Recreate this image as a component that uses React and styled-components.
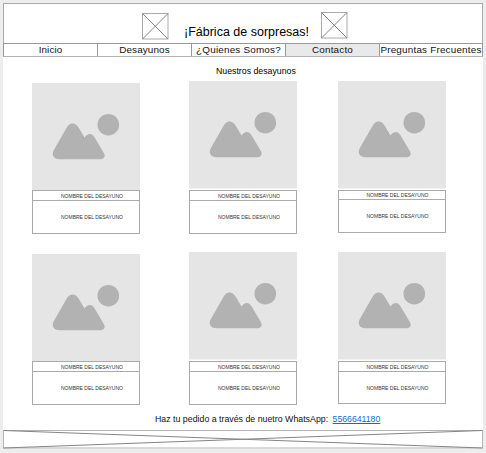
import React from "react";
import styled, { createGlobalStyle } from "styled-components";

const GlobalStyle = createGlobalStyle`
  *, *::before, *::after { box-sizing: border-box; }
  body {
    margin: 0;
    background: #ededed;
    color: #111;
    font-family: "Liberation Sans", Arial, sans-serif;
    overflow: hidden;
  }
`;

const Page = styled.div`
  width: 480px;
  height: 446px;
  margin: 3px 0 0 3px;
  background: #fff;
  display: flex;
  flex-direction: column;
`;

const Header = styled.header`
  height: 40px;
  flex: none;
  display: flex;
  align-items: flex-start;
  padding: 8px 0 0 138px;
  border: 1px solid #a9a9a9;
  border-bottom: 0;
`;

const Title = styled.h1`
  width: 126px;
  margin: 12px 11px 0 15px;
  font-size: 12.5px;
  font-weight: 400;
  line-height: 16px;
  white-space: nowrap;
  color: #000;
`;

const Logo = styled.svg`
  display: block;
  flex: none;
  width: 27px;
  height: 27px;
  margin-top: ${(p) => p.$drop}px;
`;

const Nav = styled.nav`
  flex: none;
  height: 14px;
  display: grid;
  grid-template-columns: 93px 94px 94px 94px 103px;
  border: 1px solid #999;
  border-bottom-color: #b4b4b4;
`;

const NavItem = styled.a`
  display: flex;
  justify-content: center;
  align-items: center;
  font-size: 9.9px;
  letter-spacing: ${(p) => p.$tracking}px;
  line-height: 12px;
  white-space: nowrap;
  background: ${(p) => (p.$active ? "#e9e9e9" : "#fff")};
  & + & { border-left: 1px solid #999; }
`;

const Subtitle = styled.h2`
  flex: none;
  height: 12px;
  margin: 8px 0 0 213px;
  font-size: 8.75px;
  font-weight: 400;
  line-height: 12px;
  color: #000;
`;

const Gallery = styled.main`
  flex: none;
  height: 333px;
  padding: 4px 0 0 29px;
  display: grid;
  grid-template-columns: 157px 148.5px 109px;
  grid-template-rows: 171px 158px;
`;

const Card = styled.article`
  display: flex;
  flex-direction: column;
  width: 108px;
  padding-top: ${(p) => p.$drop}px;
`;

const Photo = styled.svg`
  display: block;
  width: 108px;
  height: 107.5px;
  flex: none;
  margin-bottom: ${(p) => p.$gap}px;
`;

const Caption = styled.div`
  flex: none;
  display: flex;
  align-items: center;
  height: ${(p) => p.$height}px;
  padding-left: 28px;
  border: 1px solid #aaa;
  margin-top: ${(p) => (p.$joined ? -1 : 0)}px;
  font-size: 5px;
  line-height: 6px;
  white-space: nowrap;
  color: #333;
`;

const Contact = styled.p`
  flex: none;
  height: 14px;
  margin: 2px 0 0 152px;
  display: flex;
  gap: 4.5px;
  font-size: 8.8px;
  line-height: 14px;
  white-space: nowrap;
`;

const Phone = styled.a`
  color: #1668d8;
  text-decoration: underline;
  font-size: 8.7px;
`;

const Footer = styled.footer`
  margin-top: auto;
  height: 19px;
  flex: none;
`;

const Banner = styled.svg`
  display: block;
  width: 480px;
  height: 19px;
`;

function CrossedBox({ drop = 0 }) {
  return (
    <Logo $drop={drop} viewBox="0 0 27 27" fill="none">
      <rect x=".5" y=".5" width="25.5" height="25.5" stroke="#aaa" />
      <path d="M.5.5 26 26M26 .5.5 26" stroke="#858585" />
    </Logo>
  );
}

function Placeholder({ gap }) {
  return (
    <Photo $gap={gap} viewBox="0 0 108 107.5">
      <rect width="108" height="107.5" fill="#e5e5e5" />
      <circle cx="76.3" cy="41.7" r="10.8" fill="#b2b2b2" />
      <path
        d="M27.5 76.3C21.5 76.3 19 71.5 22 66.8L34.3 45.3C37.3 38.9 43.8 38.9 47 45.3L52.5 54.5C55.5 49.8 60 49.8 62.5 54.3L71.8 70C74 73.5 71.8 76.3 68 76.3Z"
        fill="#b2b2b2"
      />
    </Photo>
  );
}

const links = [
  { label: "Inicio", tracking: 0.1 },
  { label: "Desayunos", tracking: 0.12 },
  { label: "¿Quienes Somos?", tracking: 0.2 },
  { label: "Contacto", tracking: 0.2 },
  { label: "Preguntas Frecuentes", tracking: 0.2 },
];

const activeLink = "Contacto";

const breakfasts = [
  { drop: 2, gap: -0.5, name: 11, detail: 34 },
  { drop: 0, gap: 1.5, name: 11, detail: 34 },
  { drop: 0, gap: 1.5, name: 10, detail: 34 },
  { drop: 2, gap: -0.5, name: 11, detail: 34 },
  { drop: 0, gap: 1.5, name: 11, detail: 34 },
  { drop: 0, gap: 1.5, name: 11, detail: 33 },
];

export default function App() {
  return (
    <>
      <GlobalStyle />
      <Page>
        <Header>
          <CrossedBox drop={1} />
          <Title>¡Fábrica de sorpresas!</Title>
          <CrossedBox />
        </Header>
        <Nav>
          {links.map((l) => (
            <NavItem key={l.label} $active={l.label === activeLink} $tracking={l.tracking}>
              {l.label}
            </NavItem>
          ))}
        </Nav>
        <Subtitle>Nuestros desayunos</Subtitle>
        <Gallery>
          {breakfasts.map((b, i) => (
            <Card key={i} $drop={b.drop}>
              <Placeholder gap={b.gap} />
              <Caption $height={b.name}>NOMBRE DEL DESAYUNO</Caption>
              <Caption $height={b.detail} $joined>NOMBRE DEL DESAYUNO</Caption>
            </Card>
          ))}
        </Gallery>
        <Contact>
          <span>Haz tu pedido a través de nuetro WhatsApp:</span>
          <Phone>5566641180</Phone>
        </Contact>
        <Footer>
          <Banner viewBox="0 0 480 19" fill="none">
            <rect x=".5" y=".5" width="479" height="17.5" stroke="#b4b4b4" />
            <path d="M.5.5 479.5 18M479.5 .5.5 18" stroke="#858585" />
          </Banner>
        </Footer>
      </Page>
    </>
  );
}
